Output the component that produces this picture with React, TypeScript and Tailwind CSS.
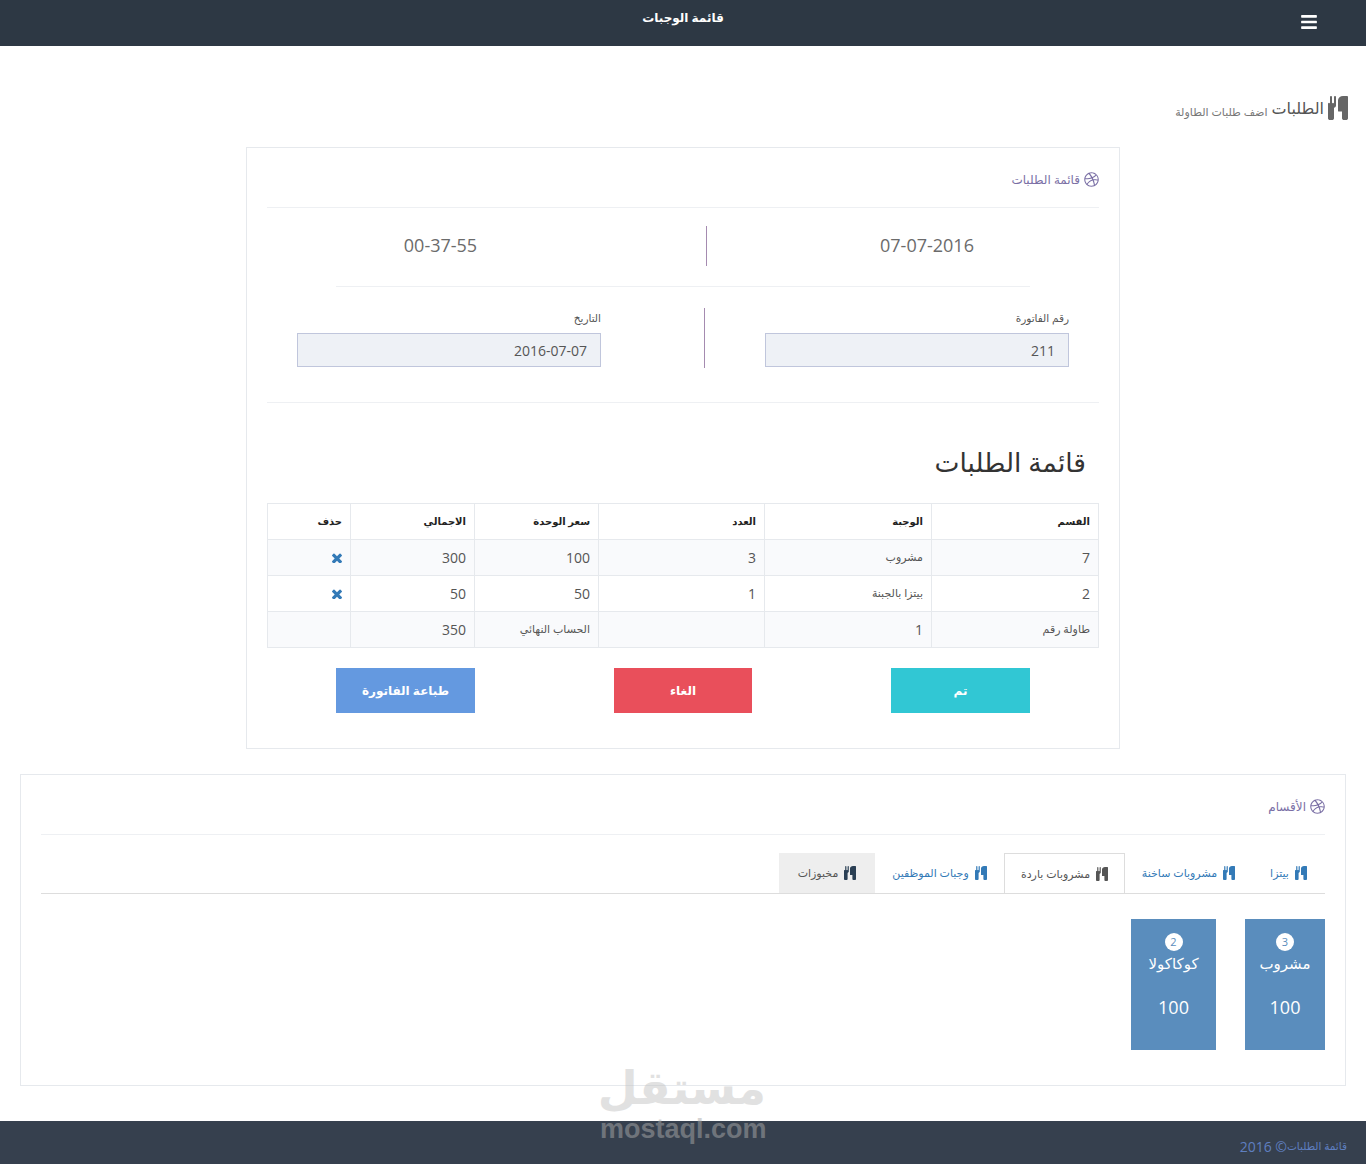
import { FaBars, FaDribbble } from "react-icons/fa";

const head = ["القسم", "الوجبة", "العدد", "سعر الوحدة", "الاجمالي", "حذف"];

const rows = [
  { cat: "7", meal: "مشروب", qty: "3", price: "100", total: "300" },
  { cat: "2", meal: "بيتزا بالجبنة", qty: "1", price: "50", total: "50" },
];

const tabs = [
  { title: "بيتزا", w: "w-[73px]", cls: "text-[#337ab7] border-b border-[#ddd]", icon: "text-[#337ab7]" },
  { title: "مشروبات ساخنة", w: "w-[127px]", cls: "text-[#337ab7] border-b border-[#ddd]", icon: "text-[#337ab7]" },
  { title: "مشروبات باردة", w: "w-[121px]", cls: "text-[#555] border border-b-0 border-[#ddd]", icon: "text-[#555]" },
  { title: "وجبات الموظفين", w: "w-[129px]", cls: "text-[#337ab7] border-b border-[#ddd]", icon: "text-[#337ab7]" },
  { title: "مخبوزات", w: "w-[96px]", cls: "text-[#555] bg-[#eee] border-b border-[#ddd]", icon: "text-[#2a3f54]" },
];

// font awesome 4 cutlery, react-icons only has the newer one
const Cutlery = ({ className }: { className: string }) => (
  <svg viewBox="128 192 1280 1792" preserveAspectRatio="none" fill="currentColor" className={className}>
    <path d="M640 256v640q0 61-35.5 111t-92.5 70v779q0 52-38 90t-90 38h-128q-52 0-90-38t-38-90v-779q-57-20-92.5-70t-35.5-111v-640q0-26 19-45t45-19 45 19 19 45v416q0 26 19 45t45 19 45-19 19-45v-416q0-26 19-45t45-19 45 19 19 45v416q0 26 19 45t45 19 45-19 19-45v-416q0-26 19-45t45-19 45 19 19 45zm768 0v1600q0 52-38 90t-90 38h-128q-52 0-90-38t-38-90v-512h-224q-13 0-22.5-9.5t-9.5-22.5v-800q0-132 94-226t226-94h256q26 0 45 19t19 45z" />
  </svg>
);

const Remove = () => (
  <svg viewBox="302 302 1188 1188" fill="currentColor" className="w-[10px] h-[10px] text-[#337ab7]">
    <path d="M1490 1322q0 40-28 68l-136 136q-28 28-68 28t-68-28l-294-294-294 294q-28 28-68 28t-68-28l-136-136q-28-28-28-68t28-68l294-294-294-294q-28-28-28-68t28-68l136-136q28-28 68-28t68 28l294 294 294-294q28-28 68-28t68 28l136 136q28 28 28 68t-28 68l-294 294 294 294q28 28 28 68z" />
  </svg>
);

const PanelTitle = ({ title }: { title: string }) => (
  <div className="h-[60px] flex items-center gap-1 pt-1 border-b border-[#eef0f3] text-[#7a6fa5] text-[12px]">
    <FaDribbble className="text-[15px]" />
    <span>{title}</span>
  </div>
);

const MealCard = ({ badge, name, w }: { badge: string; name: string; w: string }) => (
  <div className={`${w} h-[131px] bg-[#5a8dbd] text-white flex flex-col items-center pt-[14px]`}>
    <span className="w-[18px] h-[18px] rounded-full bg-white text-[#5a8dbd] text-[11px] leading-[18px] text-center">
      {badge}
    </span>
    <span className="text-[15px] leading-[24px]">{name}</span>
    <span className="text-[18px] mt-[19px]">100</span>
  </div>
);

const Field = ({ label, value }: { label: string; value: string }) => (
  <div className="w-[304px]">
    <div className="text-[10.5px] leading-[20px] text-[#555] mb-[5px]">{label}</div>
    <div className="h-[34px] bg-[#eef1f6] border border-[#c0c6dc] px-[13px] text-[14px] leading-[33px] text-[#555]">
      {value}
    </div>
  </div>
);

export default function App() {
  return (
    <div dir="rtl" className="relative min-h-[1164px] bg-white text-[#555] font-['Open_Sans','DejaVu_Sans',sans-serif]">
      <nav className="h-[46px] bg-[#2d3844] flex items-start px-[48px]">
        <FaBars className="text-white text-[18px] mt-[13px]" />
        <span className="flex-1 text-center text-white text-[12px] font-bold pt-[9px] pl-[18px]">قائمة الوجبات</span>
      </nav>

      <div className="h-[101px] pt-[22px] pr-[18px] flex items-center gap-1">
        <Cutlery className="w-[20px] h-[24px] text-[#666]" />
        <span className="text-[16px] text-[#555]">الطلبات</span>
        <span className="text-[11px] text-[#777] pt-[10px]">اضف طلبات الطاولة</span>
      </div>

      <section className="mx-[246px] h-[602px] border border-[#e6e9ed] px-[20px]">
        <PanelTitle title="قائمة الطلبات" />

        <div className="flex items-center h-[78px] pb-[2px] text-[18px] text-[#6b6b6b] text-center">
          <div className="w-[392px] pl-[48px] pb-[2px]">07-07-2016</div>
          <div className="w-px h-[40px] bg-[#a58bb0]" />
          <div className="flex-1 pr-[92px] pb-[2px]">00-37-55</div>
        </div>
        <div className="h-px bg-[#eef0f3] mx-[69px]" />

        <div className="flex items-center h-[116px] border-b border-[#eef0f3] px-[30px] pb-[15px]">
          <Field label="رقم الفاتورة" value="211" />
          <div className="w-px h-[60px] mt-[2px] bg-[#a58bb0] mx-[60px]" />
          <div className="w-[43px]" />
          <Field label="التاريخ" value="2016-07-07" />
        </div>

        <h2 className="h-[100px] pr-[13px] pt-[39px] text-[26.5px] leading-[40px] text-[#333]">قائمة الطلبات</h2>

        <table className="w-[831px] table-fixed border-collapse text-[14px]">
          <colgroup>
            <col className="w-[167px]" />
            <col className="w-[167px]" />
            <col className="w-[166px]" />
            <col className="w-[124px]" />
            <col className="w-[124px]" />
            <col className="w-[83px]" />
          </colgroup>
          <thead>
            <tr className="h-[36px]">
              {head.map((h) => (
                <th key={h} className="border border-[#e6e9ed] px-2 text-right text-[10px] font-bold text-[#222]">
                  {h}
                </th>
              ))}
            </tr>
          </thead>
          <tbody>
            {rows.map((r, i) => (
              <tr key={r.cat} className={`h-[36px] ${i === 0 ? "bg-[#f9fafc]" : ""}`}>
                <td className="border border-[#e6e9ed] px-2">{r.cat}</td>
                <td className="border border-[#e6e9ed] px-2 text-[11px]">{r.meal}</td>
                <td className="border border-[#e6e9ed] px-2">{r.qty}</td>
                <td className="border border-[#e6e9ed] px-2">{r.price}</td>
                <td className="border border-[#e6e9ed] px-2">{r.total}</td>
                <td className="border border-[#e6e9ed] px-2">
                  <Remove />
                </td>
              </tr>
            ))}
            <tr className="h-[36px] bg-[#f9fafc]">
              <td className="border border-[#e6e9ed] px-2 text-[11px]">طاولة رقم</td>
              <td className="border border-[#e6e9ed] px-2">1</td>
              <td className="border border-[#e6e9ed] px-2"></td>
              <td className="border border-[#e6e9ed] px-2 text-[11px]">الحساب النهائي</td>
              <td className="border border-[#e6e9ed] px-2">350</td>
              <td className="border border-[#e6e9ed] px-2"></td>
            </tr>
          </tbody>
        </table>

        <div className="flex justify-between mt-[20px] px-[69px] text-white text-[12px] font-bold text-center leading-[43px]">
          <button className="w-[139px] h-[45px] bg-[#31c7d4]">تم</button>
          <button className="w-[138px] h-[45px] bg-[#e94f5b]">الغاء</button>
          <button className="w-[139px] h-[45px] bg-[#6499e0]">طباعة الفاتورة</button>
        </div>
      </section>

      <section className="mx-[20px] mt-[25px] h-[312px] border border-[#e6e9ed] px-[20px]">
        <PanelTitle title="الأقسام" />

        <div className="flex mt-[18px] h-[41px] text-[11px] border-b border-[#ddd]">
          {tabs.map((t) => (
            <div key={t.title} className={`${t.w} h-[41px] flex items-center justify-center gap-[6px] ${t.cls}`}>
              <Cutlery className={`w-[12px] h-[14px] ${t.icon}`} />
              <span>{t.title}</span>
            </div>
          ))}
        </div>

        <div className="flex gap-[29px] mt-[25px]">
          <MealCard badge="3" name="مشروب" w="w-[80px]" />
          <MealCard badge="2" name="كوكاكولا" w="w-[85px]" />
        </div>
      </section>

      <footer className="mt-[35px] h-[43px] bg-[#36404e] px-[19px] flex items-center pt-[8px] text-[14px] text-[#5f7fc0]">
        <span className="text-[10.5px]">قائمة الطلبات</span>
        <span dir="ltr">2016 ©</span>
      </footer>

      <div className="absolute left-[600px] top-[1056px] w-[166px] text-center pointer-events-none select-none opacity-50">
        <div className="text-[46px] leading-[60px] font-bold text-[#c4c4c4]">مستقل</div>
        <div dir="ltr" className="text-[27px] leading-[26px] font-bold text-[#a9a9a9] font-['Liberation_Sans',sans-serif]">
          mostaql.com
        </div>
      </div>
    </div>
  );
}
